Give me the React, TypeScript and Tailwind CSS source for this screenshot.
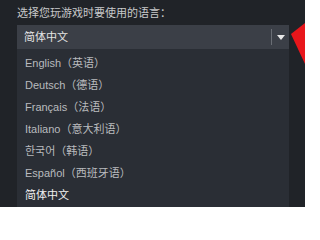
import React from "react";

const languages = [
  "English（英语）",
  "Deutsch（德语）",
  "Français（法语）",
  "Italiano（意大利语）",
  "한국어（韩语）",
  "Español（西班牙语）",
];

const font = {
  fontFamily: '"Liberation Sans", Arial, "Noto Sans CJK SC", sans-serif',
};

export default function App() {
  return (
    <div
      className="relative w-[305px] h-[207px] overflow-hidden bg-[#202328] pl-[17px] pt-[6px]"
      style={font}
    >
      {/* label */}
      <div className="text-[11px] leading-[14px] text-[#c8c9cb] h-[19px]">选择您玩游戏时要使用的语言：</div>

      {/* select box */}
      <div className="flex items-center w-[272px] h-[24px] bg-[#3b3f47] text-[11px] text-[#e4e4e4]">
        <span className="flex-1 pl-[7px] leading-none">简体中文</span>
        <div className="w-px h-[16px] bg-[#6a6e75]" />
        <div className="flex w-[17px] justify-center">
          <svg width="8" height="5" viewBox="0 0 8 5">
            <path d="M0 0 L8 0 L4 5 Z" fill="#e8e8e8" />
          </svg>
        </div>
      </div>

      {/* dropdown list */}
      <div className="w-[272px] h-[160px] bg-[#2a2e35] pt-[3px] pl-[8px]">
        {languages.map((l) => (
          <div key={l} className="h-[22px] flex items-center text-[11px] text-[#b9bbbe]">
            {l}
          </div>
        ))}
        <div className="h-[22px] flex items-center text-[11px] text-[#f0f0f0]">简体中文</div>
      </div>

      {/* red pointer arrow */}
      <svg className="absolute left-[289px] top-[20px]" width="16" height="46" viewBox="0 0 16 46">
        <polygon points="2,14 16,3 16,44" fill="#e8161b" />
      </svg>
    </div>
  );
}
